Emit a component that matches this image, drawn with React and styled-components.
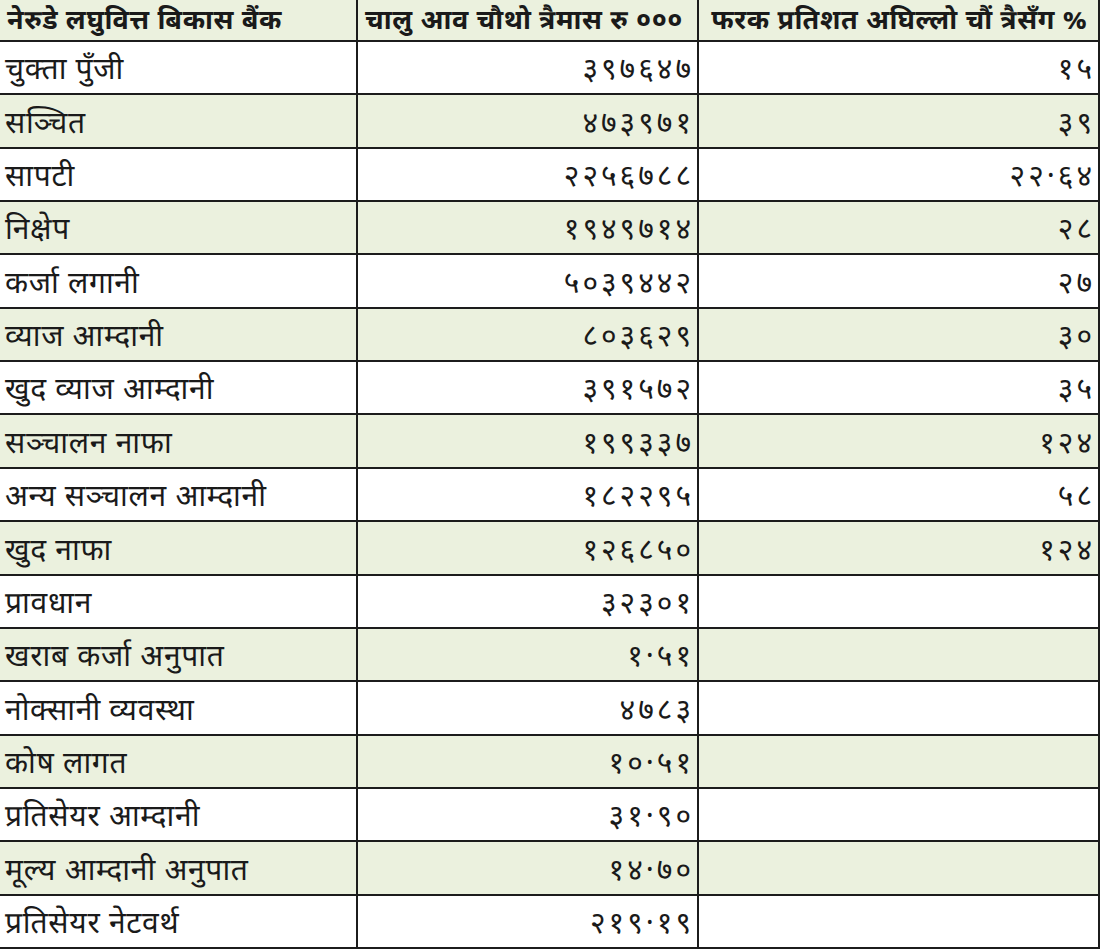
import React from "react";
import styled, { createGlobalStyle } from "styled-components";

const Global = createGlobalStyle`
  html, body { margin: 0; padding: 0; background: #ffffff; }
  body { font-family: "Noto Sans Devanagari", "Lohit Devanagari", "FreeSans", "Noto Sans", "DejaVu Sans", sans-serif; }
`;

const Table = styled.div`
  width: 1100px;
  height: 949px;
  display: grid;
  grid-template-columns: 358px 341px 401px;
  grid-template-rows: 42px repeat(17, 1fr);
  box-sizing: border-box;
  color: #1a1a1a;
`;

const Cell = styled.div`
  box-sizing: border-box;
  display: flex;
  align-items: flex-end;
  justify-content: ${(p) => (p.$align === "right" ? "flex-end" : p.$align === "center" ? "center" : "flex-start")};
  padding: 0 ${(p) => (p.$num ? "3px" : "5px")} ${(p) => (p.$head ? "2px" : "5px")} ${(p) => (p.$head ? "7px" : "5px")};
  background: ${(p) => (p.$shade ? "#ebf1de" : "#ffffff")};
  border-bottom: 2px solid #1c1c1c;
  border-right: 2px solid #1c1c1c;
  font-size: ${(p) => (p.$head ? "27px" : "30px")};
  font-weight: ${(p) => (p.$head ? 700 : 400)};
  letter-spacing: ${(p) => (p.$num ? "3px" : p.$head ? "0.6px" : "0.7px")};
  white-space: nowrap;
  overflow: hidden;
  line-height: 1.1;
`;

const rows = [
  ["चुक्ता पुँजी", "३९७६४७", "१५"],
  ["सञ्चित", "४७३९७१", "३९"],
  ["सापटी", "२२५६७८८", "२२·६४"],
  ["निक्षेप", "१९४९७१४", "२८"],
  ["कर्जा लगानी", "५०३९४४२", "२७"],
  ["व्याज आम्दानी", "८०३६२९", "३०"],
  ["खुद व्याज आम्दानी", "३९१५७२", "३५"],
  ["सञ्चालन नाफा", "१९९३३७", "१२४"],
  ["अन्य सञ्चालन आम्दानी", "१८२२९५", "५८"],
  ["खुद नाफा", "१२६८५०", "१२४"],
  ["प्रावधान", "३२३०१", ""],
  ["खराब कर्जा अनुपात", "१·५१", ""],
  ["नोक्सानी व्यवस्था", "४७८३", ""],
  ["कोष लागत", "१०·५१", ""],
  ["प्रतिसेयर आम्दानी", "३१·९०", ""],
  ["मूल्य आम्दानी अनुपात", "१४·७०", ""],
  ["प्रतिसेयर नेटवर्थ", "२१९·१९", ""],
];

export default function App() {
  return (
    <>
      <Global />
      <Table>
        <Cell $head $shade>नेरुडे लघुवित्त बिकास बैंक</Cell>
        <Cell $head $shade>चालु आव चौथो त्रैमास रु ०००</Cell>
        <Cell $head $shade $align="center">फरक प्रतिशत अघिल्लो चौं त्रैसँग %</Cell>
        {rows.map((r, i) => {
          const shade = i % 2 === 1;
          return (
            <React.Fragment key={i}>
              <Cell $shade={shade}>{r[0]}</Cell>
              <Cell $shade={shade} $num $align="right">{r[1]}</Cell>
              <Cell $shade={shade} $num $align="right">{r[2]}</Cell>
            </React.Fragment>
          );
        })}
      </Table>
    </>
  );
}
